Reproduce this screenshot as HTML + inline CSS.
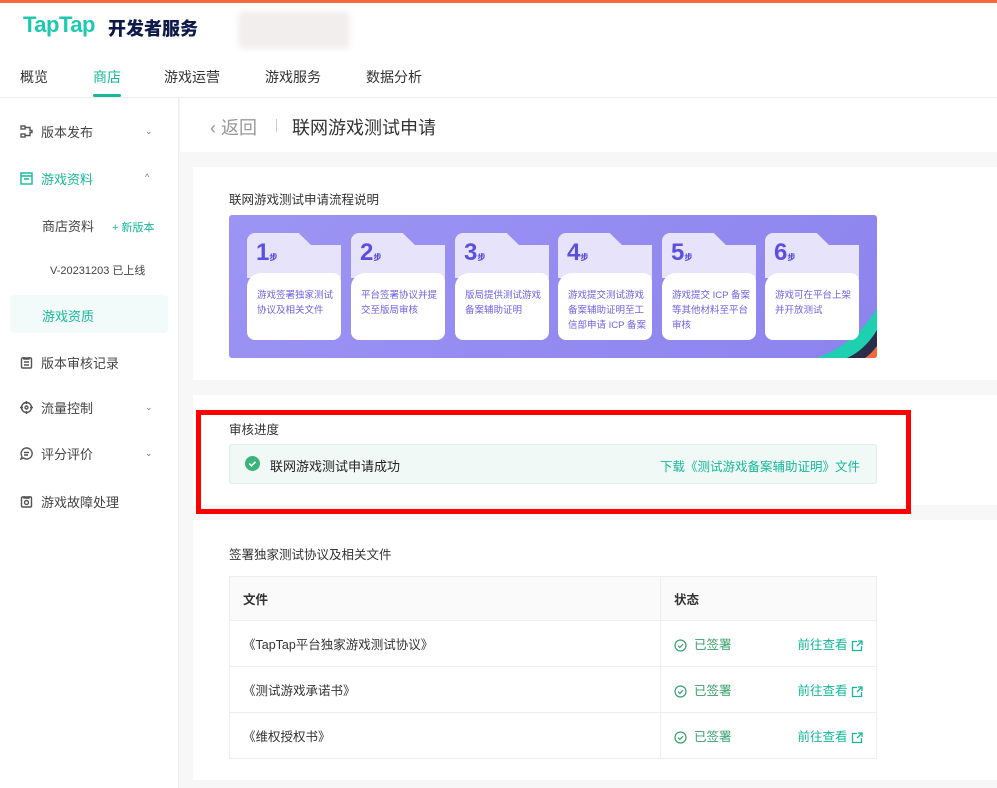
<!DOCTYPE html>
<html><head><meta charset="utf-8"><style>
*{margin:0;padding:0;box-sizing:border-box}
body{width:997px;height:788px;overflow:hidden;background:#f7f7f7;font-family:"Liberation Sans","Noto Sans CJK SC",sans-serif;color:#333;position:relative}
.abs{position:absolute}
.top{left:0;top:0;width:997px;height:3px;background:#f5683c}
.hdr{left:0;top:3px;width:997px;height:49px;background:#fff;box-shadow:0 2px 4px rgba(0,0,0,.04)}
.nav{left:0;top:52px;width:997px;height:46px;background:#fff;border-bottom:1px solid #eee}
.nav span{position:absolute;top:15px;font-size:14px;color:#333}
.side{left:0;top:98px;width:179px;height:690px;background:#fff;border-right:1px solid #eee}
.si{position:absolute;left:20px;font-size:13px;color:#444;display:flex;align-items:center}
.si svg{margin-right:8px}
.chev{position:absolute;left:145px;font-size:9px;color:#777}
.card{background:#fff;position:absolute;left:193px;width:804px}
.lbl{position:absolute;font-size:12.5px;color:#333}
.step{position:absolute;top:233px;width:94px;height:107px}
.step .tab{position:absolute;left:0;top:0;width:100%;height:45px;background:#e6e3fb;border-radius:8px 8px 0 0;clip-path:polygon(0 0,55% 0,68% 12px,100% 12px,100% 100%,0 100%)}
.step .body{position:absolute;left:0;top:40px;width:100%;height:67px;background:#fff;border-radius:14px 8px 8px 8px}
.step .num{position:absolute;left:9px;top:6px;font-size:24px;font-weight:900;color:#5b4fe0}
.step .num small{font-size:8px}
.step .t{position:absolute;left:10px;top:55px;right:4px;font-size:9.5px;line-height:15px;color:#6f63e4}
td,th{border-bottom:1px solid #eee;font-size:12.5px;text-align:left;height:46px;padding-left:13px;color:#333}
th{background:#fafafa;font-weight:bold;height:44px}
.g{color:#3a9f6e}.lk{color:#15b89a}
svg{display:inline-block;vertical-align:middle}
</style></head><body>
<div class="abs top"></div>
<div class="abs hdr">
 <div class="abs" style="left:23px;top:9px;font-size:22px;font-weight:900;color:#1ec9b1;letter-spacing:-0.5px">TapTap</div>
 <div class="abs" style="left:108px;top:12px;font-size:18px;font-weight:900;color:#0e1a4a">开发者服务</div>
 <div class="abs" style="left:238px;top:8px;width:112px;height:38px;background:#f2eeee;border-radius:6px;filter:blur(3px)"></div>
</div>
<div class="abs nav">
 <span style="left:20px">概览</span>
 <span style="left:93px;color:#15b89a">商店</span>
 <div class="abs" style="left:93px;top:42px;width:28px;height:3px;background:#15b89a;border-radius:2px"></div>
 <span style="left:164px">游戏运营</span>
 <span style="left:265px">游戏服务</span>
 <span style="left:366px">数据分析</span>
</div>
<div class="abs side">
 <div class="si" style="top:24px"><svg width="13" height="13" viewBox="0 0 13 13" fill="none" stroke="#555" stroke-width="1.4"><rect x="1" y="1" width="4" height="3"/><rect x="1" y="9" width="4" height="3"/><path d="M5 2.5h5v3h2v2h-2v3H5"/></svg>版本发布</div><div class="chev" style="top:28px">⌄</div>
 <div class="si" style="top:71px;color:#15b89a"><svg width="13" height="13" viewBox="0 0 13 13" fill="none" stroke="#15b89a" stroke-width="1.4"><rect x="1" y="1" width="11" height="11"/><path d="M1 4h11M4 7h5"/></svg>游戏资料</div><div class="chev" style="top:74px">^</div>
 <div class="si" style="top:118px;left:42px">商店资料</div><div class="abs" style="left:112px;top:121px;font-size:11px;color:#15b89a">+ 新版本</div>
 <div class="abs" style="left:50px;top:164px;font-size:11px;color:#444">V-20231203 已上线</div>
 <div class="abs" style="left:10px;top:197px;width:158px;height:38px;background:#f2fbfa;border-radius:4px"></div>
 <div class="si" style="top:208px;left:42px;color:#15b89a">游戏资质</div>
 <div class="si" style="top:255px"><svg width="13" height="13" viewBox="0 0 13 13" fill="none" stroke="#555" stroke-width="1.4"><rect x="1.5" y="2" width="10" height="10" rx="1"/><path d="M4 1v2h5V1M4 6h5M4 9h5"/></svg>版本审核记录</div>
 <div class="si" style="top:300px"><svg width="13" height="13" viewBox="0 0 13 13" fill="none" stroke="#555" stroke-width="1.4"><circle cx="6.5" cy="6.5" r="5"/><circle cx="6.5" cy="6.5" r="1.5"/><path d="M6.5 0v3M6.5 10v3M0 6.5h3M10 6.5h3"/></svg>流量控制</div><div class="chev" style="top:304px">⌄</div>
 <div class="si" style="top:346px"><svg width="13" height="13" viewBox="0 0 13 13" fill="none" stroke="#555" stroke-width="1.4"><path d="M6.5 1a5.5 5.5 0 1 1-3 10L1 12l1-2.5A5.5 5.5 0 0 1 6.5 1zM4 5.5h5M4 8h4"/></svg>评分评价</div><div class="chev" style="top:350px">⌄</div>
 <div class="si" style="top:394px"><svg width="13" height="13" viewBox="0 0 13 13" fill="none" stroke="#555" stroke-width="1.4"><rect x="1.5" y="2" width="10" height="10" rx="1"/><path d="M4 1v2h5V1"/><circle cx="6.5" cy="7.5" r="2"/></svg>游戏故障处理</div>
</div>
<div class="abs" style="left:180px;top:98px;width:817px;height:54px;background:#fff"></div>
<div class="abs" style="left:210px;top:114px;font-size:18px;color:#999">‹ 返回</div>
<div class="abs" style="left:276px;top:119px;width:1px;height:13px;background:#ccc"></div>
<div class="abs" style="left:292px;top:114px;font-size:18px;color:#333">联网游戏测试申请</div>

<div class="card" style="top:167px;height:213px"></div>
<div class="lbl" style="left:229px;top:189px">联网游戏测试申请流程说明</div>
<div class="abs" style="left:229px;top:215px;width:648px;height:143px;border-radius:3px;background:linear-gradient(135deg,#9d95f4,#8c83ee);overflow:hidden">
 <svg class="abs" style="right:0;bottom:0" width="70" height="60" viewBox="0 0 70 60"><path d="M70 10 Q50 45 10 60 L70 60Z" fill="#1ed0b0"/><path d="M70 32 Q58 52 40 60 L70 60Z" fill="#2a2d4a"/><path d="M70 48 Q64 56 58 60 L70 60Z" fill="#f5683c"/></svg>
</div>
<div class="step" style="left:247px"><div class="tab"></div><div class="body"></div><div class="num">1<small>步</small></div><div class="t">游戏签署独家测试协议及相关文件</div></div>
<div class="step" style="left:351px"><div class="tab"></div><div class="body"></div><div class="num">2<small>步</small></div><div class="t">平台签署协议并提交至版局审核</div></div>
<div class="step" style="left:455px"><div class="tab"></div><div class="body"></div><div class="num">3<small>步</small></div><div class="t">版局提供测试游戏备案辅助证明</div></div>
<div class="step" style="left:558px"><div class="tab"></div><div class="body"></div><div class="num">4<small>步</small></div><div class="t">游戏提交测试游戏备案辅助证明至工信部申请 ICP 备案</div></div>
<div class="step" style="left:662px"><div class="tab"></div><div class="body"></div><div class="num">5<small>步</small></div><div class="t">游戏提交 ICP 备案等其他材料至平台审核</div></div>
<div class="step" style="left:765px"><div class="tab"></div><div class="body"></div><div class="num">6<small>步</small></div><div class="t">游戏可在平台上架并开放测试</div></div>

<div class="card" style="top:395px;height:110px"></div>
<div class="lbl" style="left:229px;top:419px">审核进度</div>
<div class="abs" style="left:229px;top:444px;width:648px;height:40px;background:#f1f9f6;border:1px solid #dfeee8;border-radius:3px"></div>
<svg class="abs" style="left:245px;top:456px" width="15" height="15" viewBox="0 0 15 15"><circle cx="7.5" cy="7.5" r="7.5" fill="#3bb37a"/><path d="M4.3 7.6l2.2 2.2 4-4" stroke="#fff" stroke-width="1.6" fill="none"/></svg>
<div class="abs" style="left:270px;top:456px;font-size:13px;color:#222">联网游戏测试申请成功</div>
<div class="abs lk" style="left:660px;top:456px;font-size:12.5px">下载《测试游戏备案辅助证明》文件</div>
<div class="abs" style="left:196px;top:410px;width:715px;height:104px;border:5px solid #f00"></div>

<div class="card" style="top:520px;height:260px"></div>
<div class="lbl" style="left:229px;top:544px">签署独家测试协议及相关文件</div>
<table class="abs" style="left:229px;top:576px;width:648px;border:1px solid #eee;border-collapse:collapse">
<tr><th style="width:431px;border-right:1px solid #eee">文件</th><th>状态</th></tr>
<tr><td style="border-right:1px solid #eee">《TapTap平台独家游戏测试协议》</td><td><span class="g"><svg width="13" height="13" viewBox="0 0 13 13" fill="none" stroke="#3a9f6e" stroke-width="1.2"><circle cx="6.5" cy="6.5" r="5.5"/><path d="M4 6.7l1.8 1.8 3.2-3.3"/></svg>&nbsp; 已签署</span><span class="lk" style="float:right;margin-right:13px">前往查看 <svg width="12" height="12" viewBox="0 0 12 12" fill="none" stroke="#15b89a" stroke-width="1.3"><path d="M6 1.5H1.5v9h9V6M7 1h4v4M11 1L6 6"/></svg></span></td></tr>
<tr><td style="border-right:1px solid #eee">《测试游戏承诺书》</td><td><span class="g"><svg width="13" height="13" viewBox="0 0 13 13" fill="none" stroke="#3a9f6e" stroke-width="1.2"><circle cx="6.5" cy="6.5" r="5.5"/><path d="M4 6.7l1.8 1.8 3.2-3.3"/></svg>&nbsp; 已签署</span><span class="lk" style="float:right;margin-right:13px">前往查看 <svg width="12" height="12" viewBox="0 0 12 12" fill="none" stroke="#15b89a" stroke-width="1.3"><path d="M6 1.5H1.5v9h9V6M7 1h4v4M11 1L6 6"/></svg></span></td></tr>
<tr><td style="border-right:1px solid #eee">《维权授权书》</td><td><span class="g"><svg width="13" height="13" viewBox="0 0 13 13" fill="none" stroke="#3a9f6e" stroke-width="1.2"><circle cx="6.5" cy="6.5" r="5.5"/><path d="M4 6.7l1.8 1.8 3.2-3.3"/></svg>&nbsp; 已签署</span><span class="lk" style="float:right;margin-right:13px">前往查看 <svg width="12" height="12" viewBox="0 0 12 12" fill="none" stroke="#15b89a" stroke-width="1.3"><path d="M6 1.5H1.5v9h9V6M7 1h4v4M11 1L6 6"/></svg></span></td></tr>
</table>
</body></html>
